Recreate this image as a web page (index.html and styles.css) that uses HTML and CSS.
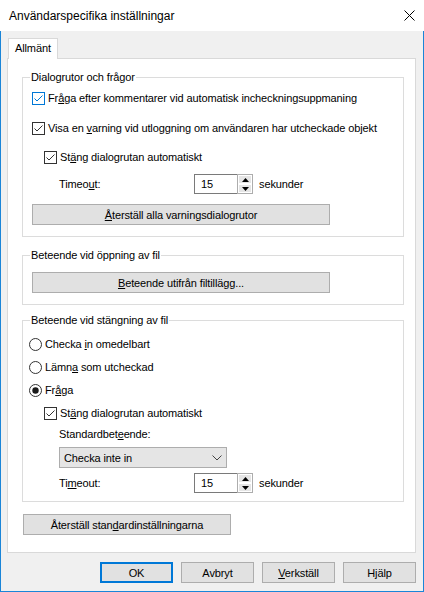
FILE: index.html
```html
<!DOCTYPE html>
<html lang="sv">
<head>
<meta charset="utf-8">
<title>Användarspecifika inställningar</title>
<link rel="stylesheet" href="styles.css">
</head>
<body>
<div class="window">
  <header class="titlebar">
    <span class="title">Användarspecifika inställningar</span>
    <svg class="close" width="11" height="11" viewBox="0 0 11 11"><path d="M0.5 0.5 L10.5 10.5 M10.5 0.5 L0.5 10.5" stroke="#000" stroke-width="1" fill="none"/></svg>
  </header>
  <main class="client">
    <div class="tabstrip"><div class="tab">Allmänt</div></div>
    <section class="panel">
      <div class="group g-dialog">
        <div class="legend">Dialogrutor och frågor</div>
        <div class="row mt3 ind1">
          <svg class="box" width="13" height="13" viewBox="0 0 13 13"><rect x="0.5" y="0.5" width="12" height="12" fill="#fff" stroke="#0078d7"/><path d="M2.5 6.5 L5 9 L10.5 3.5" fill="none" stroke="#0078d7"/></svg>
          <span class="lbl">Fr<u>å</u>ga efter kommentarer vid automatisk incheckningsuppmaning</span>
        </div>
        <div class="row mt10 ind1">
          <svg class="box" width="13" height="13" viewBox="0 0 13 13"><rect x="0.5" y="0.5" width="12" height="12" fill="#fff" stroke="#333"/><path d="M2.5 6.5 L5 9 L10.5 3.5" fill="none" stroke="#333"/></svg>
          <span class="lbl">Visa en <u>v</u>arning vid utloggning om användaren har utcheckade objekt</span>
        </div>
        <div class="row mt9 ind2">
          <svg class="box" width="13" height="13" viewBox="0 0 13 13"><rect x="0.5" y="0.5" width="12" height="12" fill="#fff" stroke="#333"/><path d="M2.5 6.5 L5 9 L10.5 3.5" fill="none" stroke="#333"/></svg>
          <span class="lbl">St<u>ä</u>ng dialogrutan automatiskt</span>
        </div>
        <div class="row mt7 ind3">
          <span class="field-label">Timeo<u>u</u>t:</span>
          <div class="spin">
            <span class="val">15</span>
            <span class="arrows">
              <span class="arr"><svg width="7" height="4" viewBox="0 0 7 4"><path d="M0 4 L3.5 0 L7 4 Z" fill="#000"/></svg></span>
              <span class="arr"><svg width="7" height="4" viewBox="0 0 7 4"><path d="M0 0 L7 0 L3.5 4 Z" fill="#000"/></svg></span>
            </span>
          </div>
          <span class="unit">sekunder</span>
        </div>
        <button class="btn wide mt10 ind1"><u>Å</u>terställ alla varningsdialogrutor</button>
      </div>

      <div class="group g-open">
        <div class="legend">Beteende vid öppning av fil</div>
        <button class="btn wide mt9 ind1"><u>B</u>eteende utifrån filtillägg...</button>
      </div>

      <div class="group g-close">
        <div class="legend">Beteende vid stängning av fil</div>
        <div class="row mt6 ind0">
          <svg class="box" width="13" height="13" viewBox="0 0 13 13"><circle cx="6.5" cy="6.5" r="6" fill="#fff" stroke="#333"/></svg>
          <span class="lbl">Checka <u>i</u>n omedelbart</span>
        </div>
        <div class="row mt3 ind0">
          <svg class="box" width="13" height="13" viewBox="0 0 13 13"><circle cx="6.5" cy="6.5" r="6" fill="#fff" stroke="#333"/></svg>
          <span class="lbl">Lämn<u>a</u> som utcheckad</span>
        </div>
        <div class="row mt3 ind0">
          <svg class="box" width="13" height="13" viewBox="0 0 13 13"><circle cx="6.5" cy="6.5" r="6" fill="#fff" stroke="#333"/><circle cx="6.5" cy="6.5" r="3.2" fill="#1a1a1a"/></svg>
          <span class="lbl">Fr<u>å</u>ga</span>
        </div>
        <div class="row mt3 ind2">
          <svg class="box" width="13" height="13" viewBox="0 0 13 13"><rect x="0.5" y="0.5" width="12" height="12" fill="#fff" stroke="#333"/><path d="M2.5 6.5 L5 9 L10.5 3.5" fill="none" stroke="#333"/></svg>
          <span class="lbl">St<u>ä</u>ng dialogrutan automatiskt</span>
        </div>
        <div class="row mt1 ind3">
          <span>Standardbet<u>e</u>ende:</span>
        </div>
        <div class="combo mt3 ind3">
          <span>Checka inte in</span>
          <svg width="10" height="6" viewBox="0 0 10 6"><path d="M0.5 0.5 L5 5 L9.5 0.5" fill="none" stroke="#444"/></svg>
        </div>
        <div class="row mt5 ind3">
          <span class="field-label">Ti<u>m</u>eout:</span>
          <div class="spin">
            <span class="val">15</span>
            <span class="arrows">
              <span class="arr"><svg width="7" height="4" viewBox="0 0 7 4"><path d="M0 4 L3.5 0 L7 4 Z" fill="#000"/></svg></span>
              <span class="arr"><svg width="7" height="4" viewBox="0 0 7 4"><path d="M0 0 L7 0 L3.5 4 Z" fill="#000"/></svg></span>
            </span>
          </div>
          <span class="unit">sekunder</span>
        </div>
      </div>

      <button class="btn reset">Återställ stan<u>d</u>ardinställningarna</button>
    </section>
    <div class="actions">
      <button class="btn dlg default">OK</button>
      <button class="btn dlg">Avbryt</button>
      <button class="btn dlg"><u>V</u>erkställ</button>
      <button class="btn dlg">Hjälp</button>
    </div>
  </main>
</div>
</body>
</html>
```
FILE: styles.css
```css
* { box-sizing: border-box; }

body {
  margin: 0;
  font-family: "Liberation Sans", Arial, sans-serif;
  font-size: 11px;
  letter-spacing: -0.12px;
  color: #000;
  background: #fff;
}

u { text-underline-offset: 1px; }

.window {
  width: 424px;
  height: 592px;
  display: flex;
  flex-direction: column;
}

.titlebar {
  height: 31px;
  flex: none;
  display: flex;
  align-items: center;
  justify-content: space-between;
  padding: 0 9px 0 9px;
  background: #fff;
}

.title { font-size: 12px; letter-spacing: 0; }

.client {
  flex: 1;
  display: flex;
  flex-direction: column;
  background: #f0f0f0;
  border: 1px solid #1a85d8;
  border-top: none;
  padding: 7px 7px 0 6px;
}

.tabstrip {
  display: flex;
  height: 20px;
  padding-left: 1px;
}

.tab {
  position: relative;
  z-index: 1;
  width: 50px;
  height: 21px;
  padding-left: 6px;
  line-height: 19px;
  background: #fff;
  border: 1px solid #d9d9d9;
  border-bottom: none;
}

.panel {
  width: 409px;
  height: 495px;
  background: #fff;
  border: 1px solid #d9d9d9;
  padding-left: 14px;
  display: flex;
  flex-direction: column;
  align-items: flex-start;
}

.group {
  width: 382px;
  border: 1px solid #dcdcdc;
  display: flex;
  flex-direction: column;
  align-items: flex-start;
}

.g-dialog { margin-top: 18px; padding-bottom: 11px; }
.g-open { margin-top: 18px; padding-bottom: 11px; }
.g-close { margin-top: 15px; padding-bottom: 8px; }

.legend {
  height: 15px;
  line-height: 15px;
  margin: -8px 0 0 7px;
  padding: 0 1px;
  background: #fff;
}

.row {
  display: flex;
  align-items: center;
  height: 20px;
}

.box { flex: none; display: block; }
.lbl { margin-left: 3px; }

.mt1 { margin-top: 1px; }
.mt3 { margin-top: 3px; }
.mt5 { margin-top: 5px; }
.mt6 { margin-top: 6px; }
.mt7 { margin-top: 7px; }
.mt9 { margin-top: 9px; }
.mt10 { margin-top: 10px; }

.ind0 { margin-left: 6px; }
.ind1 { margin-left: 9px; }
.ind2 { margin-left: 21px; }
.ind3 { margin-left: 36px; }

.field-label { width: 135px; }

.spin {
  display: flex;
  height: 20px;
}

.spin .val {
  width: 43px;
  height: 20px;
  border: 1px solid #7a7a7a;
  border-right: none;
  padding-left: 6px;
  line-height: 18px;
  background: #fff;
}

.spin .arrows {
  width: 16px;
  display: flex;
  flex-direction: column;
  border: 1px solid #adadad;
  background: #fff;
}

.spin .arr {
  flex: 1;
  display: flex;
  align-items: center;
  justify-content: center;
  background: #e5e5e5;
  border: 1px solid #fff;
}

.unit { margin-left: 6px; }

.btn {
  font: inherit;
  letter-spacing: inherit;
  color: #000;
  height: 21px;
  padding: 0;
  background: #e1e1e1;
  border: 1px solid #adadad;
  border-radius: 0;
  text-align: center;
}

.wide { width: 298px; }

.reset {
  width: 208px;
  margin: 12px 0 0 1px;
}

.combo {
  width: 168px;
  height: 21px;
  display: flex;
  align-items: center;
  justify-content: space-between;
  padding: 0 4px 0 4px;
  background: #e5e5e5;
  border: 1px solid #adadad;
}

.actions {
  display: flex;
  justify-content: flex-end;
  gap: 8px;
  margin-top: 9px;
}

.dlg { width: 73px; }

.default {
  border: 2px solid #0078d7;
}
```
